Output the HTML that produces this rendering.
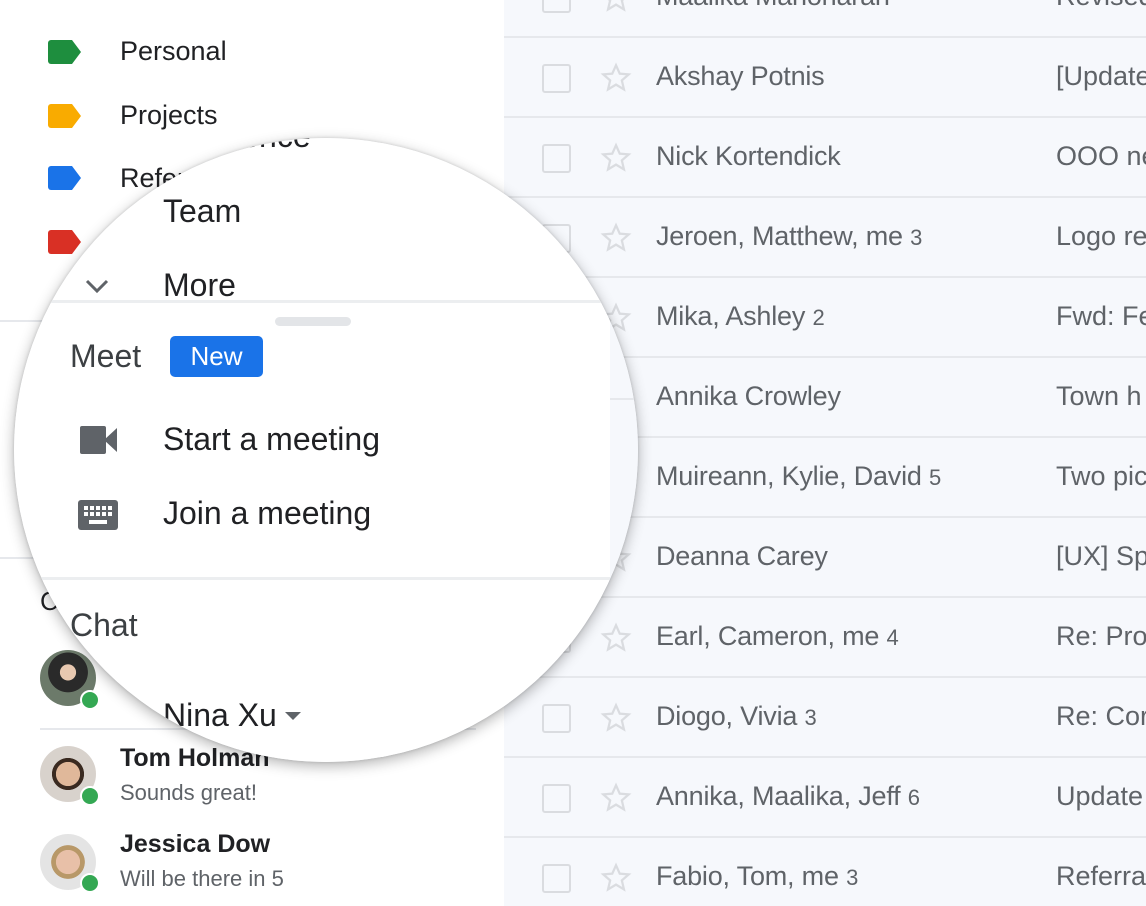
<!DOCTYPE html>
<html><head><meta charset="utf-8"><style>
*{margin:0;padding:0;box-sizing:border-box}
body{width:1146px;height:906px;overflow:hidden;position:relative;background:#fff;font-family:"Liberation Sans",sans-serif;color:#202124}
.a{position:absolute;white-space:nowrap}
#list{position:absolute;left:504px;top:0;width:642px;height:906px;background:#f6f8fc;overflow:hidden}
.row{position:absolute;left:0;width:642px;height:80px;border-bottom:2px solid #e6e8ec;white-space:nowrap}
.cb{position:absolute;left:38px;top:26px;width:29px;height:29px;border:2.5px solid #dadce0;border-radius:3px}
.st{position:absolute;left:94px;top:22px}
.nm{position:absolute;left:152px;top:23px;font-size:27px;color:#5f6368;letter-spacing:-0.2px}
.nm small{font-size:22px}
.sb{position:absolute;left:552px;top:23px;font-size:27px;color:#5f6368;white-space:nowrap}
.lab{position:absolute;left:48px;width:34px;height:24px}
.lt{font-size:27px;left:120px}
.av{position:absolute;left:40px;width:56px;height:56px;border-radius:50%}
.dot{position:absolute;width:20px;height:20px;border-radius:50%;background:#34a853;border:2px solid #fff}
#circ{position:absolute;left:14px;top:138px;width:624px;height:624px;border-radius:50%;overflow:hidden;background:#f6f8fc;box-shadow:0 4px 14px rgba(0,0,0,.3),0 0 3px rgba(0,0,0,.15)}
#circ .in{position:absolute;left:-14px;top:-138px;width:1146px;height:906px}
.big{font-size:32px}
</style></head><body>

<div class="lab" style="top:40px"><svg width="34" height="24"><path d="M3 0H24L33 12L24 24H3A3 3 0 0 1 0 21V3A3 3 0 0 1 3 0Z" fill="#1e8e3e"/></svg></div>
<div class="a lt" style="top:36px">Personal</div>
<div class="lab" style="top:104px"><svg width="34" height="24"><path d="M3 0H24L33 12L24 24H3A3 3 0 0 1 0 21V3A3 3 0 0 1 3 0Z" fill="#f9ab00"/></svg></div>
<div class="a lt" style="top:100px">Projects</div>
<div class="lab" style="top:166px"><svg width="34" height="24"><path d="M3 0H24L33 12L24 24H3A3 3 0 0 1 0 21V3A3 3 0 0 1 3 0Z" fill="#1a73e8"/></svg></div>
<div class="a lt" style="top:163px">Reference</div>
<div class="lab" style="top:230px"><svg width="34" height="24"><path d="M3 0H24L33 12L24 24H3A3 3 0 0 1 0 21V3A3 3 0 0 1 3 0Z" fill="#d93025"/></svg></div>
<div class="a" style="left:0;top:320px;width:504px;height:2px;background:#e6e8ec"></div>
<div class="a" style="left:0;top:557px;width:504px;height:2px;background:#e6e8ec"></div>
<div class="a" style="left:40px;top:586px;font-size:26px">Chat</div>

<div class="av" style="top:650px;background:radial-gradient(circle at 50% 40%,#e8c8b0 0 18%,#2a2a2a 19% 45%,#6c7a6a 46%)"></div>
<div class="dot" style="left:80px;top:690px"></div>
<div class="a" style="left:40px;top:728px;width:436px;height:2px;background:#e6e8ec"></div>
<div class="av" style="top:746px;background:radial-gradient(circle at 50% 50%,#e0b89a 0 30%,#3a2a20 31% 40%,#d8d2cc 41%)"></div>
<div class="dot" style="left:80px;top:786px"></div>
<div class="a" style="left:120px;top:744px;font-size:25px;font-weight:bold">Tom Holman</div>
<div class="a" style="left:120px;top:780px;font-size:22px;color:#5f6368">Sounds great!</div>
<div class="av" style="top:834px;background:radial-gradient(circle at 50% 50%,#e8c0a8 0 30%,#b89868 31% 42%,#e4e4e4 43%)"></div>
<div class="dot" style="left:80px;top:873px"></div>
<div class="a" style="left:120px;top:830px;font-size:25px;font-weight:bold">Jessica Dow</div>
<div class="a" style="left:120px;top:866px;font-size:22px;color:#5f6368">Will be there in 5</div>

<div id="list">
<div class="row" style="top:-42px"><div class="cb"></div><svg class="st" width="36" height="36" viewBox="0 0 24 24"><path d="M12 3.5l2.5 5.6 6 .5-4.6 4 1.4 6-5.3-3.2-5.3 3.2 1.4-6-4.6-4 6-.5z" fill="none" stroke="#dadce0" stroke-width="1.5"/></svg><div class="nm">Maalika Manoharan</div><div class="sb">Revised</div></div>
<div class="row" style="top:38px"><div class="cb"></div><svg class="st" width="36" height="36" viewBox="0 0 24 24"><path d="M12 3.5l2.5 5.6 6 .5-4.6 4 1.4 6-5.3-3.2-5.3 3.2 1.4-6-4.6-4 6-.5z" fill="none" stroke="#dadce0" stroke-width="1.5"/></svg><div class="nm">Akshay Potnis</div><div class="sb">[Update</div></div>
<div class="row" style="top:118px"><div class="cb"></div><svg class="st" width="36" height="36" viewBox="0 0 24 24"><path d="M12 3.5l2.5 5.6 6 .5-4.6 4 1.4 6-5.3-3.2-5.3 3.2 1.4-6-4.6-4 6-.5z" fill="none" stroke="#dadce0" stroke-width="1.5"/></svg><div class="nm">Nick Kortendick</div><div class="sb">OOO ne</div></div>
<div class="row" style="top:198px"><div class="cb"></div><svg class="st" width="36" height="36" viewBox="0 0 24 24"><path d="M12 3.5l2.5 5.6 6 .5-4.6 4 1.4 6-5.3-3.2-5.3 3.2 1.4-6-4.6-4 6-.5z" fill="none" stroke="#dadce0" stroke-width="1.5"/></svg><div class="nm">Jeroen, Matthew, me <small>3</small></div><div class="sb">Logo re</div></div>
<div class="row" style="top:278px"><div class="cb"></div><svg class="st" width="36" height="36" viewBox="0 0 24 24"><path d="M12 3.5l2.5 5.6 6 .5-4.6 4 1.4 6-5.3-3.2-5.3 3.2 1.4-6-4.6-4 6-.5z" fill="none" stroke="#dadce0" stroke-width="1.5"/></svg><div class="nm">Mika, Ashley <small>2</small></div><div class="sb">Fwd: Fe</div></div>
<div class="row" style="top:358px"><div class="cb"></div><svg class="st" width="36" height="36" viewBox="0 0 24 24"><path d="M12 3.5l2.5 5.6 6 .5-4.6 4 1.4 6-5.3-3.2-5.3 3.2 1.4-6-4.6-4 6-.5z" fill="none" stroke="#dadce0" stroke-width="1.5"/></svg><div class="nm">Annika Crowley</div><div class="sb">Town h</div></div>
<div class="row" style="top:438px"><div class="cb"></div><svg class="st" width="36" height="36" viewBox="0 0 24 24"><path d="M12 3.5l2.5 5.6 6 .5-4.6 4 1.4 6-5.3-3.2-5.3 3.2 1.4-6-4.6-4 6-.5z" fill="none" stroke="#dadce0" stroke-width="1.5"/></svg><div class="nm">Muireann, Kylie, David <small>5</small></div><div class="sb">Two pic</div></div>
<div class="row" style="top:518px"><div class="cb"></div><svg class="st" width="36" height="36" viewBox="0 0 24 24"><path d="M12 3.5l2.5 5.6 6 .5-4.6 4 1.4 6-5.3-3.2-5.3 3.2 1.4-6-4.6-4 6-.5z" fill="none" stroke="#dadce0" stroke-width="1.5"/></svg><div class="nm">Deanna Carey</div><div class="sb">[UX] Sp</div></div>
<div class="row" style="top:598px"><div class="cb"></div><svg class="st" width="36" height="36" viewBox="0 0 24 24"><path d="M12 3.5l2.5 5.6 6 .5-4.6 4 1.4 6-5.3-3.2-5.3 3.2 1.4-6-4.6-4 6-.5z" fill="none" stroke="#dadce0" stroke-width="1.5"/></svg><div class="nm">Earl, Cameron, me <small>4</small></div><div class="sb">Re: Pro</div></div>
<div class="row" style="top:678px"><div class="cb"></div><svg class="st" width="36" height="36" viewBox="0 0 24 24"><path d="M12 3.5l2.5 5.6 6 .5-4.6 4 1.4 6-5.3-3.2-5.3 3.2 1.4-6-4.6-4 6-.5z" fill="none" stroke="#dadce0" stroke-width="1.5"/></svg><div class="nm">Diogo, Vivia <small>3</small></div><div class="sb">Re: Cor</div></div>
<div class="row" style="top:758px"><div class="cb"></div><svg class="st" width="36" height="36" viewBox="0 0 24 24"><path d="M12 3.5l2.5 5.6 6 .5-4.6 4 1.4 6-5.3-3.2-5.3 3.2 1.4-6-4.6-4 6-.5z" fill="none" stroke="#dadce0" stroke-width="1.5"/></svg><div class="nm">Annika, Maalika, Jeff <small>6</small></div><div class="sb">Update</div></div>
<div class="row" style="top:838px"><div class="cb"></div><svg class="st" width="36" height="36" viewBox="0 0 24 24"><path d="M12 3.5l2.5 5.6 6 .5-4.6 4 1.4 6-5.3-3.2-5.3 3.2 1.4-6-4.6-4 6-.5z" fill="none" stroke="#dadce0" stroke-width="1.5"/></svg><div class="nm">Fabio, Tom, me <small>3</small></div><div class="sb">Referra</div></div>
</div>

<div id="circ"><div class="in">
  <div class="a" style="left:610px;top:0;width:40px;height:906px;background:#f6f8fc"></div>
  <div class="a" style="left:610px;top:200px;width:40px;height:2px;background:#e6e8ec"></div>
  <div class="a" style="left:610px;top:398px;width:40px;height:2px;background:#e6e8ec"></div>
  <div class="a" style="left:610px;top:595px;width:40px;height:2px;background:#e6e8ec"></div>
  <div class="a" style="left:0;top:0;width:610px;height:906px;background:#fff"></div>
  <div class="a big" style="left:163px;top:118px">Reference</div>
  <div class="a big" style="left:163px;top:193px">Team</div>
  <svg class="a" style="left:84px;top:278px" width="26" height="18"><path d="M3 3L13 13L23 3" fill="none" stroke="#5f6368" stroke-width="3"/></svg>
  <div class="a big" style="left:163px;top:267px">More</div>
  <div class="a" style="left:0;top:300px;width:610px;height:3px;background:#eceef0"></div>
  <div class="a" style="left:275px;top:317px;width:76px;height:9px;border-radius:5px;background:#e3e5e8"></div>
  <div class="a big" style="left:70px;top:338px;color:#3c4043">Meet</div>
  <div class="a" style="left:170px;top:336px;width:93px;height:41px;border-radius:5px;background:#1a73e8;color:#fff;font-size:26px;text-align:center;line-height:41px">New</div>
  <svg class="a" style="left:80px;top:426px" width="38" height="28"><rect x="0" y="0" width="26" height="28" rx="2" fill="#5f6368"/><path d="M24 14L37 2V26Z" fill="#5f6368"/></svg>
  <div class="a big" style="left:163px;top:421px">Start a meeting</div>
  <svg class="a" style="left:78px;top:500px" width="40" height="30"><rect width="40" height="30" rx="3" fill="#5f6368"/><g fill="#fff"><rect x="6" y="6" width="4" height="4"/><rect x="12" y="6" width="4" height="4"/><rect x="18" y="6" width="4" height="4"/><rect x="24" y="6" width="4" height="4"/><rect x="30" y="6" width="4" height="4"/><rect x="6" y="12" width="4" height="4"/><rect x="12" y="12" width="4" height="4"/><rect x="18" y="12" width="4" height="4"/><rect x="24" y="12" width="4" height="4"/><rect x="30" y="12" width="4" height="4"/><rect x="11" y="20" width="18" height="4"/></g></svg>
  <div class="a big" style="left:163px;top:495px">Join a meeting</div>
  <div class="a" style="left:0;top:577px;width:610px;height:3px;background:#eceef0"></div>
  <div class="a big" style="left:70px;top:607px;color:#3c4043">Chat</div>
  <div class="a big" style="left:163px;top:697px">Nina Xu</div>
  <svg class="a" style="left:285px;top:712px" width="16" height="10"><path d="M0 0H16L8 8Z" fill="#5f6368"/></svg>
</div></div>
</body></html>
